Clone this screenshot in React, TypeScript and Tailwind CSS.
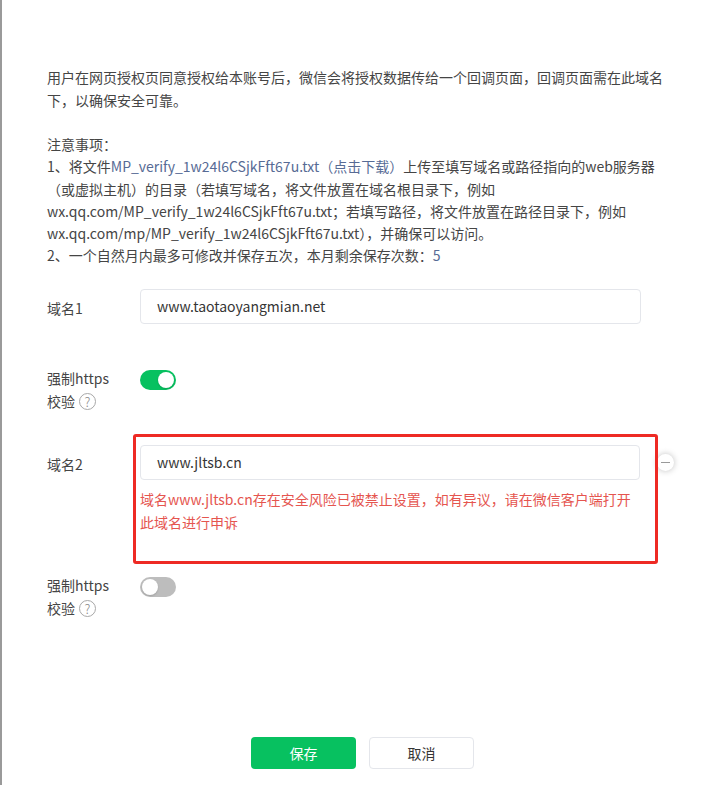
import React from 'react';

const font = { fontFamily: '"Noto Sans CJK SC", "Noto Sans", sans-serif' };

function Toggle({ on }: { on: boolean }) {
  return (
    <div
      className={`mt-[3px] flex h-[20px] w-[36px] items-center rounded-full px-[2px] ${
        on ? 'justify-end bg-[#07c160]' : 'justify-start bg-[#bdbdbd]'
      }`}
    >
      <div className="h-[16px] w-[16px] rounded-full bg-white shadow-[0_1px_2px_rgba(0,0,0,0.15)]" />
    </div>
  );
}

function HttpsRow({ on }: { on: boolean }) {
  return (
    <div className="flex">
      <div className="w-[93px] shrink-0 leading-[22.4px]">
        <div>强制https</div>
        <div className="flex items-center gap-[4px]">
          校验
          <span className="flex h-[17px] w-[17px] items-center justify-center rounded-full border border-[#a8a8a8] text-[13px] font-light leading-none text-[#8c8c8c]">
            ?
          </span>
        </div>
      </div>
      <Toggle on={on} />
    </div>
  );
}

export default function App() {
  return (
    <div style={font} className="min-h-[785px] border-l-2 border-[#9a9a9a] bg-white text-[14px] text-[#454545]">
      <div className="w-[672px] pl-[45px] pt-[66px]">
        <p className="leading-[22.6px]">
          用户在网页授权页同意授权给本账号后，微信会将授权数据传给一个回调页面，回调页面需在此域名下，以确保安全可靠。
        </p>

        <div className="mt-[22px] leading-[22.2px]">
          <div>注意事项：</div>
          <p>
            1、将文件<a className="text-[#576b95]">MP_verify_1w24l6CSjkFft67u.txt（点击下载）</a>上传至填写域名或路径指向的web服务器（或虚拟主机）的目录（若填写域名，将文件放置在域名根目录下，例如
            wx.qq.com/MP_verify_1w24l6CSjkFft67u.txt；若填写路径，将文件放置在路径目录下，例如
            wx.qq.com/mp/MP_verify_1w24l6CSjkFft67u.txt），并确保可以访问。
          </p>
          <p>
            2、一个自然月内最多可修改并保存五次，本月剩余保存次数：<span className="text-[#576b95]">5</span>
          </p>
        </div>

        {/* 域名1 */}
        <div className="mt-[23px] flex">
          <div className="w-[93px] shrink-0 pt-[8px] leading-[22.4px]">域名1</div>
          <div className="flex h-[35px] w-[501px] items-center rounded-[4px] border border-[#e4e6eb] pl-[16px] text-[#353535]">
            www.taotaoyangmian.net
          </div>
        </div>

        <div className="mt-[43px]">
          <HttpsRow on />
        </div>

        {/* 域名2 */}
        <div className="relative mt-[33px] flex">
          <div className="w-[93px] shrink-0 pt-[8px] leading-[22.4px]">域名2</div>
          <div className="w-[501px]">
            <div className="flex h-[35px] items-center rounded-[4px] border border-[#e4e6eb] pl-[16px] text-[#353535]">
              www.jltsb.cn
            </div>
            <div className="mt-[8px] leading-[22.6px] text-[#e5554f]">
              域名www.jltsb.cn存在安全风险已被禁止设置，如有异议，请在微信客户端打开此域名进行申诉
            </div>
          </div>
          <div className="ml-[17px] mt-[9px] flex h-[17px] w-[17px] items-center justify-center rounded-full bg-white shadow-[0_0_6px_rgba(0,0,0,0.25)]">
            <div className="h-[1px] w-[9px] bg-[#9a9a9a]" />
          </div>
          <div className="pointer-events-none absolute left-[86px] top-[-11px] h-[130px] w-[525px] rounded-[3px] border-[3px] border-[#ee2a24]" />
        </div>

        <div className="mt-[41px]">
          <HttpsRow on={false} />
        </div>
      </div>

      <div className="mt-[118px] flex justify-center gap-[13px] pr-[2px]">
        <button className="h-[32px] w-[105px] rounded-[4px] bg-[#07c160] text-[14px] text-white">保存</button>
        <button className="h-[32px] w-[105px] rounded-[4px] border border-[#e4e6eb] bg-white text-[14px] text-[#353535]">
          取消
        </button>
      </div>
    </div>
  );
}
